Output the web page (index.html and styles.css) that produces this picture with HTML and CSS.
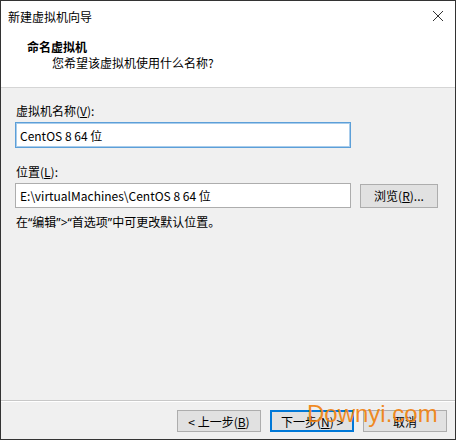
FILE: index.html
```html
<!DOCTYPE html>
<html lang="zh-CN">
<head>
    <meta charset="UTF-8">
    <meta name="viewport" content="width=device-width, initial-scale=1.0">
    <title>新建虚拟机向导</title>
    <link rel="stylesheet" href="styles.css">
</head>
<body>
    <div class="window">
        <div class="titlebar">
            <span class="title">新建虚拟机向导</span>
            <svg class="close" width="12" height="12" viewBox="0 0 12 12">
                <path d="M1 1 L11 11 M11 1 L1 11" stroke="#333" stroke-width="1" fill="none"/>
            </svg>
        </div>
        <div class="header">
            <div class="header-title">命名虚拟机</div>
            <div class="header-sub">您希望该虚拟机使用什么名称?</div>
        </div>
        <div class="content">
            <label class="field-label">虚拟机名称(<u>V</u>):</label>
            <input class="textbox focused" type="text" value="CentOS 8 64 位">
            <label class="field-label second">位置(<u>L</u>):</label>
            <div class="row">
                <input class="textbox" type="text" value="E:\virtualMachines\CentOS 8 64 位">
                <button class="btn browse">浏览(<u>R</u>)...</button>
            </div>
            <div class="hint">在<span class="q">“</span>编辑<span class="q">”&gt;“</span>首选项<span class="q">”</span>中可更改默认位置。</div>
        </div>
        <div class="footer">
            <button class="btn">&lt; 上一步(<u>B</u>)</button>
            <button class="btn default">下一步(<u>N</u>) &gt;</button>
            <button class="btn">取消</button>
        </div>
        <div class="watermark">Downyi.com</div>
    </div>
</body>
</html>
```

FILE: styles.css
```css
body {
    margin: 0;
    padding: 0;
    background-color: #ffffff;
    font-family: "Noto Sans CJK SC", "Noto Sans", sans-serif;
    font-size: 12px;
    color: #000;
}
.window {
    position: relative;
    width: 456px;
    height: 440px;
    box-sizing: border-box;
    border: 1px solid #333;
    display: flex;
    flex-direction: column;
    background-color: #f0f0f0;
    overflow: hidden;
}
.titlebar {
    height: 29px;
    background-color: #fff;
    display: flex;
    align-items: center;
    justify-content: space-between;
    padding: 0 11px 0 7px;
}
.title {
    line-height: 16px;
    margin-top: 2px;
}
.close {
    display: block;
    margin-top: 1px;
}
.header {
    height: 58px;
    background-color: #fff;
    border-bottom: 1px solid #d5d5d5;
    padding-left: 26px;
    box-sizing: border-box;
    padding-top: 9px;
}
.header-title {
    font-weight: bold;
    line-height: 16px;
}
.header-sub {
    line-height: 16px;
    padding-left: 25px;
}
.content {
    flex: 1;
    padding: 15px 14px 0 14px;
    display: flex;
    flex-direction: column;
    align-items: flex-start;
}
.field-label {
    line-height: 16px;
    margin-left: 1px;
    margin-bottom: 3px;
}
.field-label.second {
    margin-top: 16px;
}
.textbox {
    width: 336px;
    height: 26px;
    box-sizing: border-box;
    border: 1px solid #adadad;
    background-color: #fff;
    font-family: "Noto Sans CJK SC", "Noto Sans", sans-serif;
    font-size: 12px;
    padding: 0 4px;
    margin: 0;
    outline: none;
    color: #000;
}
.textbox.focused {
    border: 1px solid #5c9fd8;
    box-shadow: inset 0 0 0 1px #a9cdec;
}
.row {
    display: flex;
    align-items: center;
    gap: 9px;
}
.row .textbox {
    height: 25px;
}
.btn {
    width: 84px;
    height: 22px;
    box-sizing: border-box;
    background-color: #e1e1e1;
    border: 1px solid #adadad;
    font-family: "Noto Sans CJK SC", "Noto Sans", sans-serif;
    font-size: 12px;
    color: #000;
    padding: 0;
    margin: 0;
}
.btn.browse {
    width: 78px;
    height: 24px;
}
.btn.default {
    border: 1px solid #0078d7;
    box-shadow: inset 0 0 0 1px #0078d7;
}
.hint {
    line-height: 16px;
    margin-top: 6px;
    margin-left: 1px;
}
.hint .q {
    font-family: "Noto Sans", sans-serif;
}
.footer {
    height: 39px;
    box-sizing: border-box;
    border-top: 1px solid #c8c8c8;
    box-shadow: inset 0 1px 0 #fff;
    padding: 9px 8px 0 0;
    display: flex;
    justify-content: flex-end;
    align-items: flex-start;
    gap: 9px;
}
.watermark {
    position: absolute;
    left: 306px;
    top: 399px;
    font-family: "Liberation Sans", Arial, sans-serif;
    font-size: 24px;
    color: rgba(240, 132, 20, 0.95);
    pointer-events: none;
}
```
